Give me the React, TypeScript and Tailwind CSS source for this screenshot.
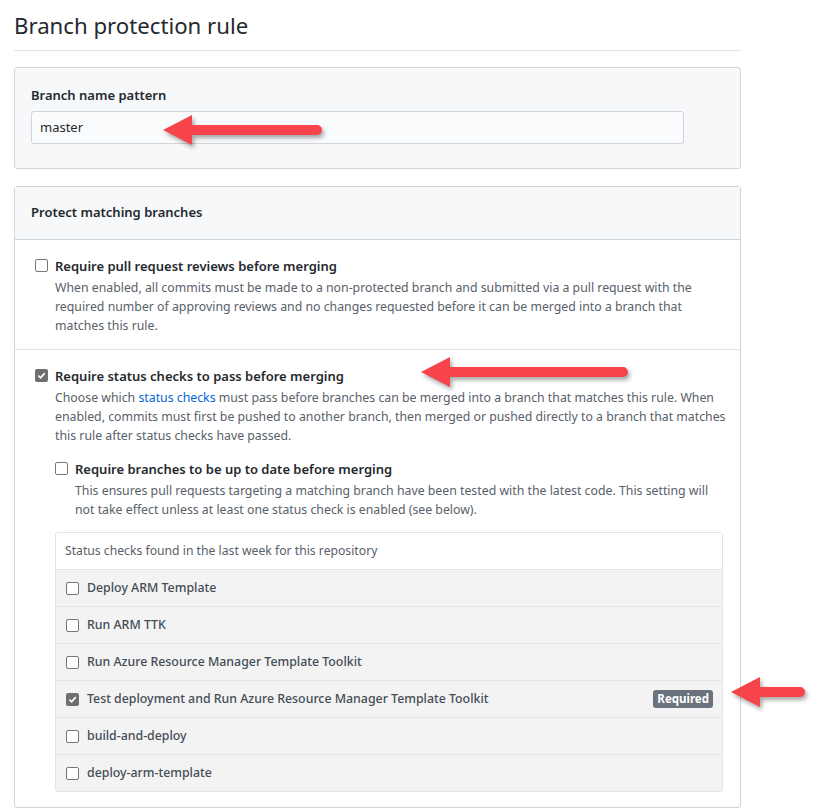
import React from "react";

const font = { fontFamily: '"Noto Sans", "Open Sans", sans-serif' };

function Check({ checked }: { checked?: boolean }) {
  if (checked) {
    return (
      <span className="flex h-[13px] w-[13px] shrink-0 items-center justify-center rounded-[2px] bg-[#6f6f6f]">
        <svg width="9" height="9" viewBox="0 0 10 10">
          <path d="M1.5 5.2 L4 7.6 L8.6 2.4" fill="none" stroke="#fff" strokeWidth="1.8" />
        </svg>
      </span>
    );
  }
  return <span className="block h-[13px] w-[13px] shrink-0 rounded-[2px] border border-[#767676] bg-white" />;
}

function Arrow({ tip, cy, base, end }: { tip: number; cy: number; base: number; end: number }) {
  const d = `M${tip},${cy} L${base},${cy - 15} L${base},${cy - 5} L${end},${cy - 5} A5,5 0 0 1 ${end},${cy + 5} L${base},${cy + 5} L${base},${cy + 15} Z`;
  return <path d={d} fill="#f7434a" />;
}

const rows = [
  "Deploy ARM Template",
  "Run ARM TTK",
  "Run Azure Resource Manager Template Toolkit",
  "Test deployment and Run Azure Resource Manager Template Toolkit",
  "build-and-deploy",
  "deploy-arm-template",
];

export default function App() {
  return (
    <div className="relative h-[808px] w-[818px] overflow-hidden bg-white text-[#24292e]" style={font}>
      <div className="ml-[14px] w-[727px]">
        <div className="border-b border-[#e1e4e8] pb-[6px] pt-[8px] text-[22.2px] leading-[36px] font-normal">
          Branch protection rule
        </div>

        <div className="mt-[16px] rounded-[3px] border border-[#d1d5da] bg-[#f6f8fa] px-[16px] pb-[24px] pt-[17px]">
          <div className="text-[13px] font-semibold leading-[20px]">Branch name pattern</div>
          <div className="mt-[6px] flex h-[33px] w-[653px] items-center rounded-[3px] border border-[#d1d5da] bg-[#fafbfc] px-[8px] text-[13px]">
            master
          </div>
        </div>

        <div className="mt-[17px] rounded-[3px] border border-[#d1d5da]">
          <div className="flex h-[53px] items-center border-b border-[#d1d5da] bg-[#f6f8fa] px-[16px] text-[13px] font-semibold">
            Protect matching branches
          </div>

          <div className="border-b border-[#e1e4e8] pb-[14px] pl-[20px] pt-[16px]">
            <div className="flex items-start gap-[7px]">
              <div className="pt-[3px]"><Check /></div>
              <div>
                <div className="text-[13px] font-semibold leading-[20px]">Require pull request reviews before merging</div>
                <div className="mt-[2px] whitespace-nowrap text-[12.3px] leading-[19px] text-[#586069]">
                  When enabled, all commits must be made to a non-protected branch and submitted via a pull request with the
                  <br />
                  required number of approving reviews and no changes requested before it can be merged into a branch that
                  <br />
                  matches this rule.
                </div>
              </div>
            </div>
          </div>

          <div className="pb-[15px] pl-[20px] pr-[17px] pt-[16px]">
            <div className="flex items-start gap-[7px]">
              <div className="pt-[3px]"><Check checked /></div>
              <div className="flex-1">
                <div className="text-[13px] font-semibold leading-[20px]">Require status checks to pass before merging</div>
                <div className="mt-[2px] whitespace-nowrap text-[12.3px] leading-[19px] text-[#586069]">
                  Choose which <span className="text-[#0366d6]">status checks</span> must pass before branches can be merged into a branch that matches this rule. When
                  <br />
                  enabled, commits must first be pushed to another branch, then merged or pushed directly to a branch that matches
                  <br />
                  this rule after status checks have passed.
                </div>

                <div className="mt-[14px] flex items-start gap-[7px]">
                  <div className="pt-[3px]"><Check /></div>
                  <div>
                    <div className="text-[13px] font-semibold leading-[20px]">Require branches to be up to date before merging</div>
                    <div className="mt-[2px] whitespace-nowrap text-[12.3px] leading-[19px] text-[#586069]">
                      This ensures pull requests targeting a matching branch have been tested with the latest code. This setting will
                      <br />
                      not take effect unless at least one status check is enabled (see below).
                    </div>
                  </div>
                </div>

                <div className="mt-[13px] w-[668px] overflow-hidden rounded-[3px] border border-[#e1e4e8]">
                  <div className="flex h-[36px] items-center bg-white pl-[9px] text-[12.2px] text-[#586069]">
                    Status checks found in the last week for this repository
                  </div>
                  {rows.map((r, i) => (
                    <div key={r} className="flex h-[37px] items-center gap-[8px] border-t border-[#e1e4e8] bg-[#f3f3f3] pl-[10px] pr-[9px]">
                      <Check checked={i === 3} />
                      <span className="flex-1 text-[12.35px] font-medium text-[#444d56]">{r}</span>
                      {i === 3 && (
                        <span className="flex h-[18px] items-center rounded-[3px] bg-[#6a737d] px-[4px] text-[11.5px] font-bold text-white">
                          Required
                        </span>
                      )}
                    </div>
                  ))}
                </div>
              </div>
            </div>
          </div>
        </div>
      </div>

      <svg className="pointer-events-none absolute left-0 top-0" width="818" height="808" style={{ filter: "drop-shadow(2px 3px 2px rgba(0,0,0,0.35))" }}>
        <Arrow tip={163} cy={130} base={192} end={317} />
        <Arrow tip={421} cy={372} base={450} end={623} />
        <Arrow tip={731} cy={692} base={760} end={800} />
      </svg>
    </div>
  );
}
